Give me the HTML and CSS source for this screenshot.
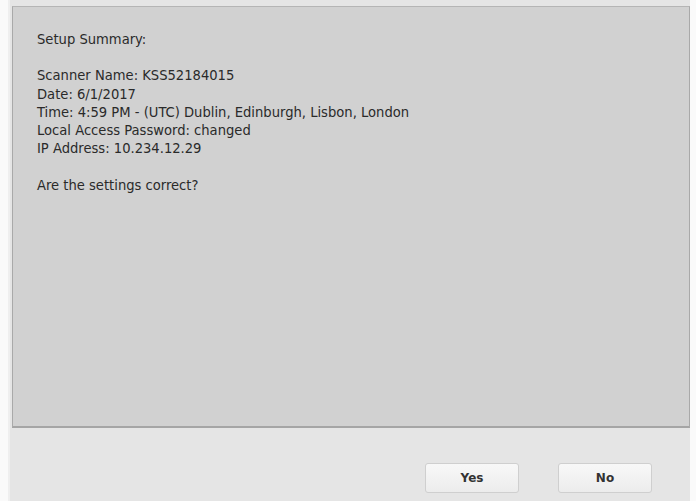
FILE: index.html
```html
<!DOCTYPE html>
<html>
<head>
<meta charset="utf-8">
<link rel="stylesheet" href="styles.css">
</head>
<body>
<div class="frame">
  <div class="panel">
    <p>Setup Summary:</p>
    <p>Scanner Name: KSS52184015<br>Date: 6/1/2017<br>Time: 4:59 PM - (UTC) Dublin, Edinburgh, Lisbon, London<br>Local Access Password: changed<br>IP Address: 10.234.12.29</p>
    <p>Are the settings correct?</p>
  </div>
  <div class="footer">
    <button class="btn">Yes</button>
    <button class="btn">No</button>
  </div>
</div>
</body>
</html>
```

FILE: styles.css
```css
html, body {
  margin: 0;
  padding: 0;
  background: #fafafa;
  height: 100%;
}
body {
  padding-left: 8px;
  padding-right: 6px;
  box-sizing: border-box;
}
.frame {
  height: 501px;
  background: #e5e5e5;
  border-left: 2px solid #efefef;
  padding: 6px 0 0 2px;
  box-sizing: border-box;
  display: flex;
  flex-direction: column;
}
.panel {
  height: 422px;
  box-sizing: border-box;
  background: #d1d1d1;
  border: 1px solid #a9a9a9;
  border-top-color: #b5b5b5;
  border-bottom: 2px solid #a5a5a5;
  padding: 23px 24px;
  font-family: "DejaVu Sans Condensed", "DejaVu Sans", sans-serif;
  font-size: 14.6px;
  line-height: 18.2px;
  color: #2a2a2a;
}
.panel p {
  margin: 0 0 18.2px 0;
}
.footer {
  flex: 1;
  display: flex;
  justify-content: flex-end;
  align-items: flex-start;
  gap: 39px;
  padding: 35px 38px 0 0;
}
.btn {
  width: 94px;
  height: 30px;
  border: 1px solid #cfcfcf;
  border-radius: 3px;
  background: linear-gradient(#f8f8f8, #ececec);
  font-family: "DejaVu Sans", sans-serif;
  font-weight: bold;
  font-size: 12px;
  color: #333;
  padding: 0;
}
```
